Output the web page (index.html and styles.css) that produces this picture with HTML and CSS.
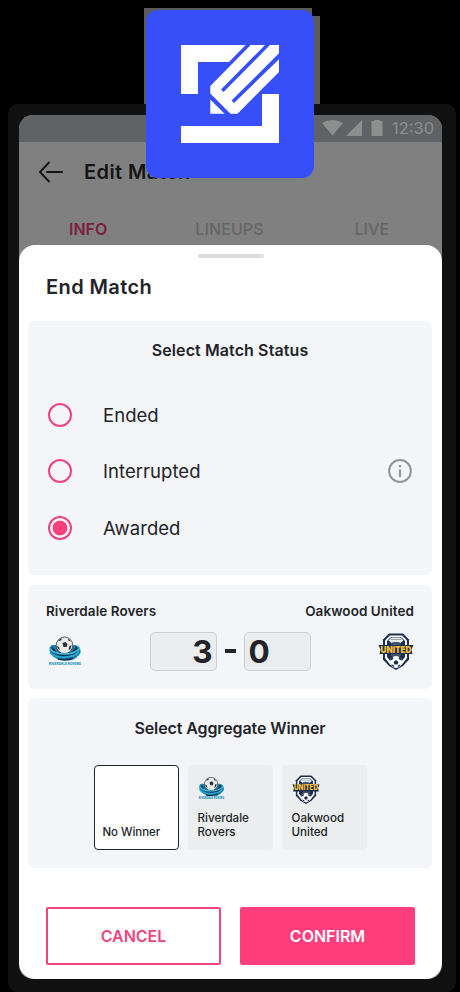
FILE: index.html
```html
<!DOCTYPE html>
<html lang="en">
<head>
<meta charset="utf-8">
<title>End Match</title>
<link rel="stylesheet" href="styles.css">
</head>
<body>
<svg class="defs" width="0" height="0" aria-hidden="true">
  <symbol id="rovers" viewBox="0 0 34 30">
    <path d="M4 9C0 11 1 18 6 21Q11 25 18 24.500Q26 25 30 20Q34 17 32 13Q31 9 26 9z" fill="#1583af"/>
    <path d="M4 10Q3 16 9 19Q17 23 27 18Q32 14 28 10L24 16H9z" fill="#103a50"/>
    <circle cx="16.500" cy="9.300" r="8.300" fill="#e9ebeb" stroke="#33383b" stroke-width=".8"/>
    <path d="M14.500 7l3-1 2 2-1 3h-3zM10 5l2-2 2-.5-1 2zM20 2.500l3 3-3-1zM9 10l2 1 1 3-2-1zM21.500 10l2-1-1 4-2 1z" fill="#2b3034"/>
    <path d="M2 13Q7 18 17 18T32 12" fill="none" stroke="#41bfe3" stroke-width="1.700"/>
    <path d="M2 17Q8 22 18 21T31 16" fill="none" stroke="#2ba9d3" stroke-width="1.500"/>
    <path d="M10 23q8 2 15-1" fill="none" stroke="#0d3045" stroke-width="1.500"/>
  </symbol>
  <symbol id="united" viewBox="0 0 36 37">
    <path d="M11 .5h14l6 6v20l-6 6.500-7 4-7-4-6-6.500v-20z" fill="#1c2e50"/>
    <path d="M12 2.500h12l5 5V25l-5 6.500-6 3-6-3L7 25V7.500z" fill="#fff"/>
    <path d="M13 4h10l4 4v16l-4 5H13l-4-5V8z" fill="#1c2e50"/>
    <path d="M13.500 4.500h9l3 3-3 2.500h-9l-3-2.500z" fill="#e9ecef"/>
    <path d="M12.500 6.500h11" stroke="#8a93a2" stroke-width=".8"/>
    <rect x="13" y="9" width="10" height="15" rx="3" fill="#44536d"/>
    <circle cx="18" cy="29" r="6" fill="#fff"/>
    <path d="M18 27l2.500 2-1 2.500h-3l-1-2.500zM12.500 26l2-2 1 1.500-2 2zM20.500 25.500l1-1.500 2 2-1 1.500zM13.500 31.500l2 .5 1 2-3-1zM20.500 32l2-.5-1 2-2 .5z" fill="#1c2e50"/>
    <path d="M.5 12h35l-2 4.500 1 4.500h-33l1-4.500z" fill="#1c2e50"/>
  </symbol>
</svg>
<main class="stage">
  <div class="phone">
    <div class="screen">
      <div class="status-bar">
        <svg class="signals" viewBox="0 0 62 16"><path d="M0 3Q10.500-3 21 3L10.500 15.500ZM40 0v16H24ZM52 0h6v1h2.500v15h-11V1H52z" fill="#8d8f8f"/></svg>
        <span class="clock">12:30</span>
      </div>
      <header class="app-bar">
        <svg class="back" viewBox="0 0 26 22"><path d="M11 1.500L2 11l9 9.500M9 11h15" fill="none" stroke="#151515" stroke-width="1.900" stroke-linecap="round"/></svg>
        <span class="page-title">Edit Match</span>
      </header>
      <nav class="tabs"><span class="tab active">INFO</span><span class="tab lineups">LINEUPS</span><span class="tab live">LIVE</span></nav>
      <section class="sheet">
        <div class="handle"></div>
        <h1 class="sheet-title">End Match</h1>
        <div class="panel statuses">
          <h2 class="heading status-heading">Select Match Status</h2>
          <div class="option"><span class="radio"></span><span>Ended</span></div>
          <div class="option"><span class="radio"></span><span>Interrupted</span>
            <svg class="info" viewBox="0 0 24 24"><circle cx="12" cy="12" r="10.900" fill="none" stroke="#93959a" stroke-width="2"/><path d="M12 6v2.200M12 10.500v7.500" stroke="#93959a" stroke-width="2.200"/></svg>
          </div>
          <div class="option"><span class="radio checked"></span><span>Awarded</span></div>
        </div>
        <div class="panel match">
          <div class="teams"><span class="home">Riverdale Rovers</span><span class="away">Oakwood United</span></div>
          <div class="score-row">
            <svg class="home-logo" viewBox="0 0 34 30"><use href="#rovers" width="34" height="30"/><text x="1" y="28.500" textLength="32" lengthAdjust="spacingAndGlyphs" class="rovers-text">RIVERDALE ROVERS</text></svg>
            <div class="score"><span class="box right">3</span><span class="dash"></span><span class="box">0</span></div>
            <svg class="away-logo" viewBox="0 0 36 37"><use href="#united" width="36" height="37"/><text x="2.500" y="19.700" textLength="31" lengthAdjust="spacingAndGlyphs" class="united-text">UNITED</text></svg>
          </div>
        </div>
        <div class="panel aggregate">
          <h2 class="heading aggregate-heading">Select Aggregate Winner</h2>
          <div class="cards">
            <div class="card selected"><span class="none">No Winner</span></div>
            <div class="card"><svg class="card-rovers" viewBox="0 0 34 30"><use href="#rovers" width="34" height="30"/><text x="1" y="28.500" textLength="32" lengthAdjust="spacingAndGlyphs" class="rovers-text">RIVERDALE ROVERS</text></svg><span>Riverdale<br>Rovers</span></div>
            <div class="card"><svg class="card-united" viewBox="0 0 36 37"><use href="#united" width="36" height="37"/><text x="2.500" y="19.700" textLength="31" lengthAdjust="spacingAndGlyphs" class="united-text">UNITED</text></svg><span>Oakwood<br>United</span></div>
          </div>
        </div>
        <div class="actions"><button class="button cancel">CANCEL</button><button class="button confirm">CONFIRM</button></div>
      </section>
    </div>
  </div>
  <div class="shade left"></div><div class="shade side"></div>
  <div class="badge">
    <svg viewBox="146 10 168 168">
      <path d="M181 45h64.700L229 62h-31v32h-17zM262 94h17v49h-98v-17h81z" fill="#fff"/>
      <path d="M250.700 45H265L221 89.500l2.500 2.500L270 45h9v8.300L231.500 100.500l2.500 2.500L279 59.300v12.700L237.500 113.700H230.500L210.300 93.500V86zM210.300 99.500L224.500 113.700H210.300z" fill="#fff"/>
    </svg>
  </div>
</main>
</body>
</html>
```

FILE: styles.css
```css
* { box-sizing: border-box; }
body { margin: 0; background: #000; font-family: Inter, sans-serif; color: #222427; }
.defs { position: absolute; }
.stage { position: relative; width: 460px; height: 992px; padding: 104px 4px 0 8px; overflow: hidden; }
.phone { height: 888px; background: #111; border-radius: 10px; padding: 11px 14px 13px 11px; }
.screen { height: 864px; border-radius: 14px; background: #808080; overflow: hidden; display: flex; flex-direction: column; }
.status-bar { height: 27px; background: #606365; display: flex; justify-content: flex-end; align-items: center; padding: 0 8px 2px 0; gap: 8px; }
.signals { width: 62px; height: 16px; }
.clock { color: #8d8f8f; font-size: 16.500px; width: 42px; white-space: nowrap; }
.app-bar { height: 60px; display: flex; align-items: center; padding: 0 0 1px 19px; gap: 20px; }
.back { width: 26px; height: 22px; }
.page-title { font-size: 20px; font-weight: 600; letter-spacing: 0.4px; color: #151515; }
.tabs { height: 43px; display: grid; grid-template-columns: repeat(3, 1fr); justify-items: center; align-items: center; padding-top: 10px; line-height: 20px; margin: 0 -1px 0 -3px; }
.tab { font-size: 16px; font-weight: 500; letter-spacing: 0.1px; color: #656565; }
.active { color: #7e213f; font-weight: 600; letter-spacing: 0; padding-left: 2px; }
.sheet { flex: 1; background: #fff; border-radius: 16px; display: flex; flex-direction: column; padding: 9px 9px 14px; }
.handle { width: 66px; height: 4px; border-radius: 2px; background: #dcdcde; align-self: center; }
.sheet-title { margin: 17px 0 22px 18px; line-height: 24px; font-size: 20px; font-weight: 600; letter-spacing: 0.4px; }
.panel { background: #f4f5f9; border-radius: 6px; width: 404px; flex: none; }
.statuses { height: 254px; padding: 17px 20px 0; }
.heading { margin: 0; text-align: center; font-size: 16px; font-weight: 600; line-height: 24px; }
.status-heading { margin-bottom: 24.6px; letter-spacing: 0.1px; }
.aggregate-heading { letter-spacing: -0.1px; }
.option { height: 56.5px; display: flex; align-items: center; font-size: 18.500px; gap: 31px; letter-spacing: 0.05px; }
.radio { width: 24px; height: 24px; border: 2px solid #f04380; border-radius: 50%; flex: none; }
.checked { background: radial-gradient(circle, #ff3f7d 7px, transparent 7.700px); }
.info { width: 24px; height: 24px; margin-left: auto; }
.match { height: 104px; margin-top: 10px; padding: 16px 18px 0; }
.teams { display: flex; justify-content: space-between; line-height: 20px; font-size: 13.500px; font-weight: 600; letter-spacing: 0.06px; }
.score-row { display: flex; justify-content: space-between; align-items: center; margin-top: 8px; height: 44px; }
.home-logo { width: 34px; height: 30px; margin-left: 2px; overflow: visible; }
.away-logo { width: 36px; height: 37px; overflow: visible; }
.score { display: flex; align-items: center; gap: 8px; }
.box { width: 67px; height: 39px; border: 1px solid #cecfd2; border-radius: 5px; background: #ebecee; padding: 0 4px; font-size: 31.500px; line-height: 37px; font-weight: 700; }
.right { text-align: right; padding-right: 3px; }
.dash { width: 11px; height: 4px; background: #222427; }
.aggregate { height: 170px; margin-top: 9px; padding: 18px 0 0; }
.cards { display: flex; justify-content: center; gap: 9px; margin-top: 25px; }
.card { width: 85px; height: 85px; border-radius: 4px; background: #ebedee; padding: 10px 9px 11px 10px; display: flex; flex-direction: column; justify-content: space-between; font-size: 11.600px; font-weight: 500; line-height: 14px; white-space: nowrap; }
.selected { background: #fff; border: 1px solid #222427; justify-content: flex-end; padding: 9px 8px 10px 8px; font-size: 11.400px; }
.card-rovers { width: 27px; height: 27px; overflow: visible; }
.card-united { width: 28px; height: 29px; overflow: visible; }
.actions { display: flex; gap: 19px; margin: auto 18px 0; }
.button { width: 175px; height: 58px; font: 600 16px Inter, sans-serif; border: 2px solid #f04380; border-radius: 2px; padding: 0; }
.cancel { background: #fff; color: #ee4580; }
.confirm { background: #ff3f7d; border-color: #ff3f7d; color: #fff; }
.shade { position: absolute; background: #5b5b5b; }
.left { left: 144px; top: 8px; width: 168px; height: 96px; }
.side { left: 312px; top: 16px; width: 8px; height: 88px; }
.badge { position: absolute; left: 146px; top: 10px; width: 168px; height: 168px; border-radius: 12px; background: #364ff8; }
.badge svg { display: block; width: 168px; height: 168px; }
.rovers-text { font: 800 4px Inter, sans-serif; fill: #1b91b9; }
.united-text { font: 900 9px Inter, sans-serif; fill: #f3bd36; }
```
